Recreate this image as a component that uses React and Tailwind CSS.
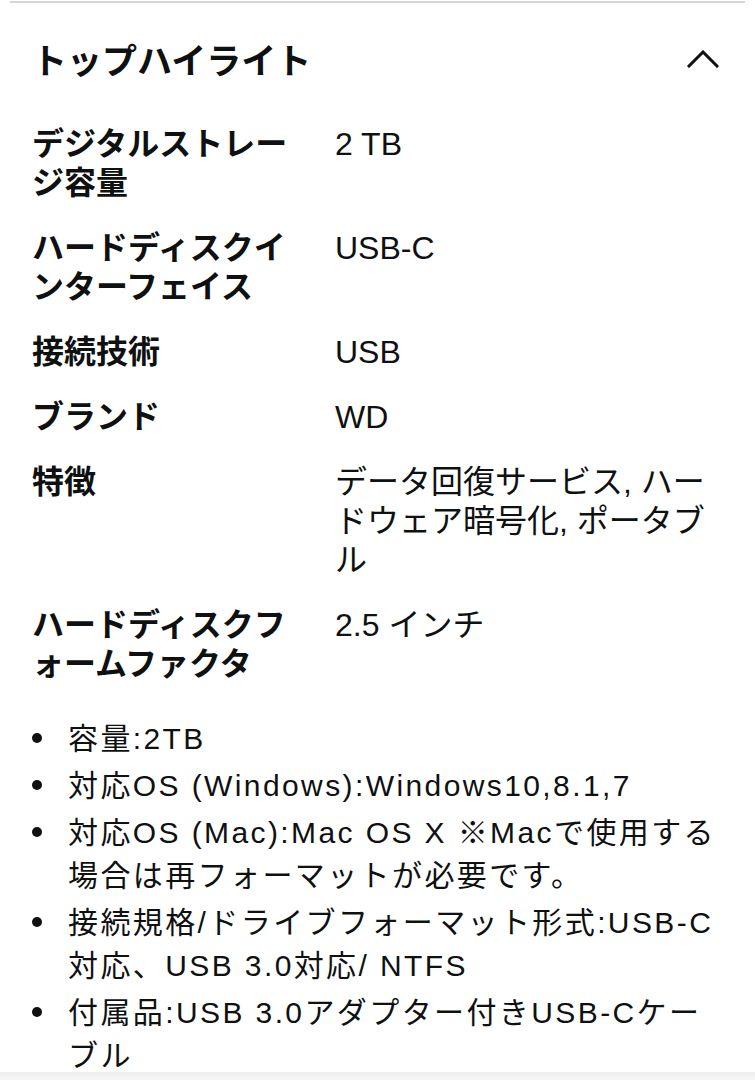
const specs = [
  { label: "デジタルストレージ容量", value: "2 TB" },
  { label: "ハードディスクインターフェイス", value: "USB-C" },
  { label: "接続技術", value: "USB" },
  { label: "ブランド", value: "WD" },
  { label: "特徴", value: "データ回復サービス, ハードウェア暗号化, ポータブル" },
  { label: "ハードディスクフォームファクタ", value: "2.5 インチ" },
];

const bullets = [
  "容量:2TB",
  "対応OS (Windows):Windows10,8.1,7",
  "対応OS (Mac):Mac OS X ※Macで使用する場合は再フォーマットが必要です。",
  "接続規格/ドライブフォーマット形式:USB-C対応、USB 3.0対応/ NTFS",
  "付属品:USB 3.0アダプター付きUSB-Cケーブル",
];

function ChevronUp() {
  return (
    <svg width="32" height="18" viewBox="0 0 32 18" fill="none" stroke="#0f1111" strokeWidth="3" strokeLinecap="square">
      <polyline points="2,16 16,2 30,16" />
    </svg>
  );
}

export default function App() {
  return (
    <div className="w-[755px] h-[1080px] bg-white overflow-hidden flex flex-col text-[#0f1111] font-['Liberation_Sans','Noto_Sans_CJK_JP',sans-serif]">
      <div className="mx-[10px] mt-[1px] h-[2px] bg-[#d5d5d5]" />

      <div className="flex-1 overflow-hidden px-[32px]">
        <div className="mt-[34px] flex items-center justify-between h-[50px]">
          <h2 className="text-[35px] leading-[50px] font-bold">トップハイライト</h2>
          <div className="mr-[4px] -mt-[6px]"><ChevronUp /></div>
        </div>

        <div className="mt-[38px] grid grid-cols-[272px_1fr] gap-x-[31px] gap-y-[26px] text-[32px] leading-[39px]">
          {specs.map((s) => (
            <div key={s.label} className="contents">
              <div className="font-bold">{s.label}</div>
              <div>{s.value}</div>
            </div>
          ))}
        </div>

        <ul className="mt-[33px] flex flex-col gap-[4px] text-[30px] leading-[43px] tracking-[2.4px]">
          {bullets.map((b) => (
            <li key={b} className="flex">
              <span className="w-[36px] shrink-0 flex items-start pt-[16px]">
                <span className="w-[10px] h-[10px] rounded-full bg-[#0f1111]" />
              </span>
              <span>{b}</span>
            </li>
          ))}
        </ul>
      </div>

      <div className="h-[8px] bg-gradient-to-b from-[#eeeeee] to-[#f6f6f6]" />
    </div>
  );
}
